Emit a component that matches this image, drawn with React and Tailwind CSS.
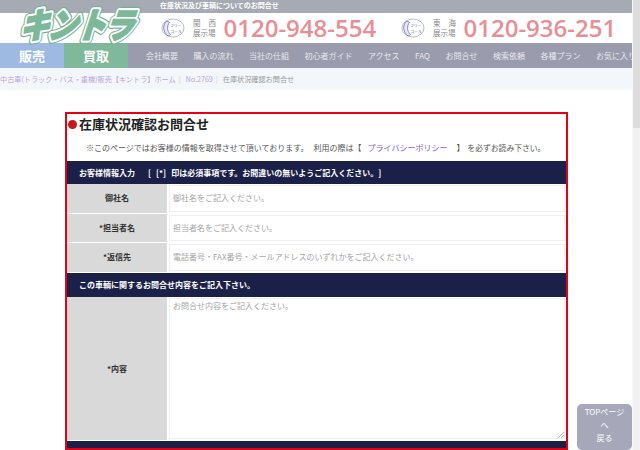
import React from "react";

const jp = "font-['Noto_Sans_CJK_JP','Noto_Sans',sans-serif]";

const navItems = ["会社概要", "購入の流れ", "当社の仕組", "初心者ガイド", "アクセス", "FAQ", "お問合せ", "検索依頼", "各種プラン", "お気に入り"];

const Logo = () => (
  <svg viewBox="0 0 140 46" className="absolute left-[10px] top-0 w-[140px] h-[46px] overflow-visible">
    <g transform="translate(9 38) skewX(-18) scale(1.02 1.2)" fontFamily="'Noto Sans CJK JP'" fontWeight="900" fontSize="29" letterSpacing="-1">
      <text x="0" y="0" fill="#fff" stroke="#74b192" strokeWidth="7" strokeLinejoin="round">キントラ</text>
      <text x="0" y="0" fill="#fff" stroke="#fff" strokeWidth="5" strokeLinejoin="round">キントラ</text>
      <text x="0" y="0" fill="#7db89a" stroke="#7db89a" strokeWidth="1.400" strokeLinejoin="round">キントラ</text>
    </g>
  </svg>
);

const FreeCall = () => (
  <svg viewBox="0 0 25 20" className="w-[25px] h-[20px] shrink-0">
    <ellipse cx="13" cy="10" rx="11" ry="9" fill="#fff" stroke="#a4a6d2" strokeWidth="0.8" />
    <path d="M7 3C2.500 6 2.500 14 8 18l2.500-1.500C7 13.500 6.500 8 9.500 4.500Z" fill="#e6e7f5" stroke="#6f72b4" strokeWidth="0.8" />
    <text x="16" y="9" textAnchor="middle" fontSize="3.800" fill="#5a5da8" fontFamily="'Noto Sans CJK JP'">フリー</text>
    <text x="16" y="14.500" textAnchor="middle" fontSize="3.800" fill="#5a5da8" fontFamily="'Noto Sans CJK JP'">コール</text>
  </svg>
);

const Phone = ({ area, number, className }) => (
  <div className={"flex items-center " + className}>
    <FreeCall />
    <div className="ml-[8px] w-[23px] text-[#8a8a8a] text-[7.5px] leading-[10px]">
      <div className="flex justify-between"><span>{area[0]}</span><span>{area[1]}</span></div>
      <div>展示場</div>
    </div>
    <div className="ml-[7.500px] font-['Open_Sans',sans-serif] font-semibold text-[#e88f95] text-[24px] leading-none">{number}</div>
  </div>
);

const Row = ({ label, placeholder }) => (
  <div className="flex h-[29.500px] border-b border-white">
    <div className="w-[100px] bg-[#d9d9d9] flex items-center justify-center font-bold text-[8px] text-[#333]">{label}</div>
    <div className="flex-1 pl-[2px] pr-[1px] py-[1px]">
      <div className="h-full border border-[#eef0f6] flex items-center pl-[3px] text-[8px] text-[#a5a5a5]">{placeholder}</div>
    </div>
  </div>
);

const Bar = ({ children, className }) => (
  <div className={"bg-[#1b2048] text-white font-bold text-[8px] flex items-center pl-[12px] " + className}>{children}</div>
);

export default function App() {
  return (
    <div className={"relative flex w-[640px] h-[450px] overflow-hidden bg-white " + jp}>
      <div className="w-[632px] shrink-0">
        <div className="relative">
          <div className="h-[13px] bg-[#a6aab3] pl-[160px] text-white font-bold text-[7px] leading-[11px]">在庫状況及び車輌についてのお問合せ</div>
          <div className="h-[30px] bg-white flex items-center pl-[160px]">
            <Phone area={["関", "西"]} number="0120-948-554" className="w-[240px]" />
            <Phone area={["東", "海"]} number="0120-936-251" />
          </div>
          <Logo />
        </div>
        <div className="flex h-[25px] bg-[#9a9bad]">
          <div className="w-[64px] bg-[#9fbae2] text-white font-bold text-[13px] flex items-center justify-center">販売</div>
          <div className="w-[64px] bg-[#80b89b] text-white font-bold text-[13px] flex items-center justify-center">買取</div>
          <div className="flex-1 min-w-0 overflow-hidden flex items-center gap-[15.500px] pl-[18px] text-[8px] text-[#e8e8ee] whitespace-nowrap">
            {navItems.map((n) => <span key={n}>{n}</span>)}
          </div>
        </div>
        <div className="h-[22px] bg-[#f3f6fa] flex items-center text-[7.150px] whitespace-nowrap">
          <span className="text-[#bba6dc]">中古車(トラック・バス・重機)販売【キントラ】ホーム</span>
          <span className="ml-[3px] text-[#ccc]">|</span>
          <span className="ml-[5px] text-[#bba6dc]">No.2769</span>
          <span className="ml-[3px] text-[#ccc]">|</span>
          <span className="ml-[5px] text-[#999]">在庫状況確認お問合せ</span>
        </div>
        <div className="ml-[65px] mt-[22px] w-[503px] h-[338px] border-2 border-[#e60012] overflow-hidden">
          <div className="h-[20px] flex items-center pl-[1px] font-bold text-[13px] text-[#222]">
            <span className="w-[9px] h-[9px] rounded-full bg-[#c8161d] mr-[2px]" />
            在庫状況確認お問合せ
          </div>
          <div className="h-[27px] flex items-center pl-[19px] text-[8px] text-[#555] whitespace-nowrap">
            <span>※このページではお客様の情報を取得させて頂いております。</span>
            <span className="ml-[5px]">利用の際は【</span>
            <span className="ml-[6px] text-[#7a5cf0]">プライバシーポリシー</span>
            <span className="ml-[9px]">】</span>
            <span className="ml-[3px] text-[7.800px]">を必ずお読み下さい。</span>
          </div>
          <Bar className="h-[23px] whitespace-nowrap">
            <span>お客様情報入力</span>
            <span className="ml-[13px]">[</span>
            <span className="ml-[5px]">[*]</span>
            <span className="ml-[5px]">印は必須事項です。お間違いの無いようご記入ください。</span>
            <span>]</span>
          </Bar>
          <Row label="御社名" placeholder="御社名をご記入ください。" />
          <Row label="*担当者名" placeholder="担当者名をご記入ください。" />
          <Row label="*返信先" placeholder="電話番号・FAX番号・メールアドレスのいずれかをご記入ください。" />
          <Bar className="h-[24px]">この車輌に関するお問合せ内容をご記入下さい。</Bar>
          <div className="flex h-[144px] border-b border-white">
            <div className="w-[100px] bg-[#d9d9d9] flex items-center justify-center pt-[2px] font-bold text-[8px] text-[#333]">*内容</div>
            <div className="relative flex-1 pl-[2px] pr-[1px] py-[1px]">
              <div className="h-full border border-[#eef0f6] pl-[3px] pt-[1px] text-[8px] text-[#a5a5a5]">お問合せ内容をご記入ください。</div>
              <svg viewBox="0 0 6 6" className="absolute right-[2px] bottom-[2px] w-[6px] h-[6px]">
                <path d="M0 6 6 0M3 6 6 3" stroke="#999" strokeWidth="0.7" />
              </svg>
            </div>
          </div>
          <Bar className="h-[10px] items-start pt-[6px]">下記の内容をご確認下さい。</Bar>
        </div>
      </div>
      <div className="flex-1 bg-[#f1f1f1] border-l border-[#f7f7f7]">
        <div className="h-[128px] bg-[#dcdcdc]" />
      </div>
      <div className="absolute left-[577px] top-[404px] w-[55px] h-[46px] rounded-[5px] bg-[#a6a8ba] text-white text-[8px] leading-[13px] pt-[1px] text-center">
        TOPページ<br />へ<br />戻る
      </div>
    </div>
  );
}
